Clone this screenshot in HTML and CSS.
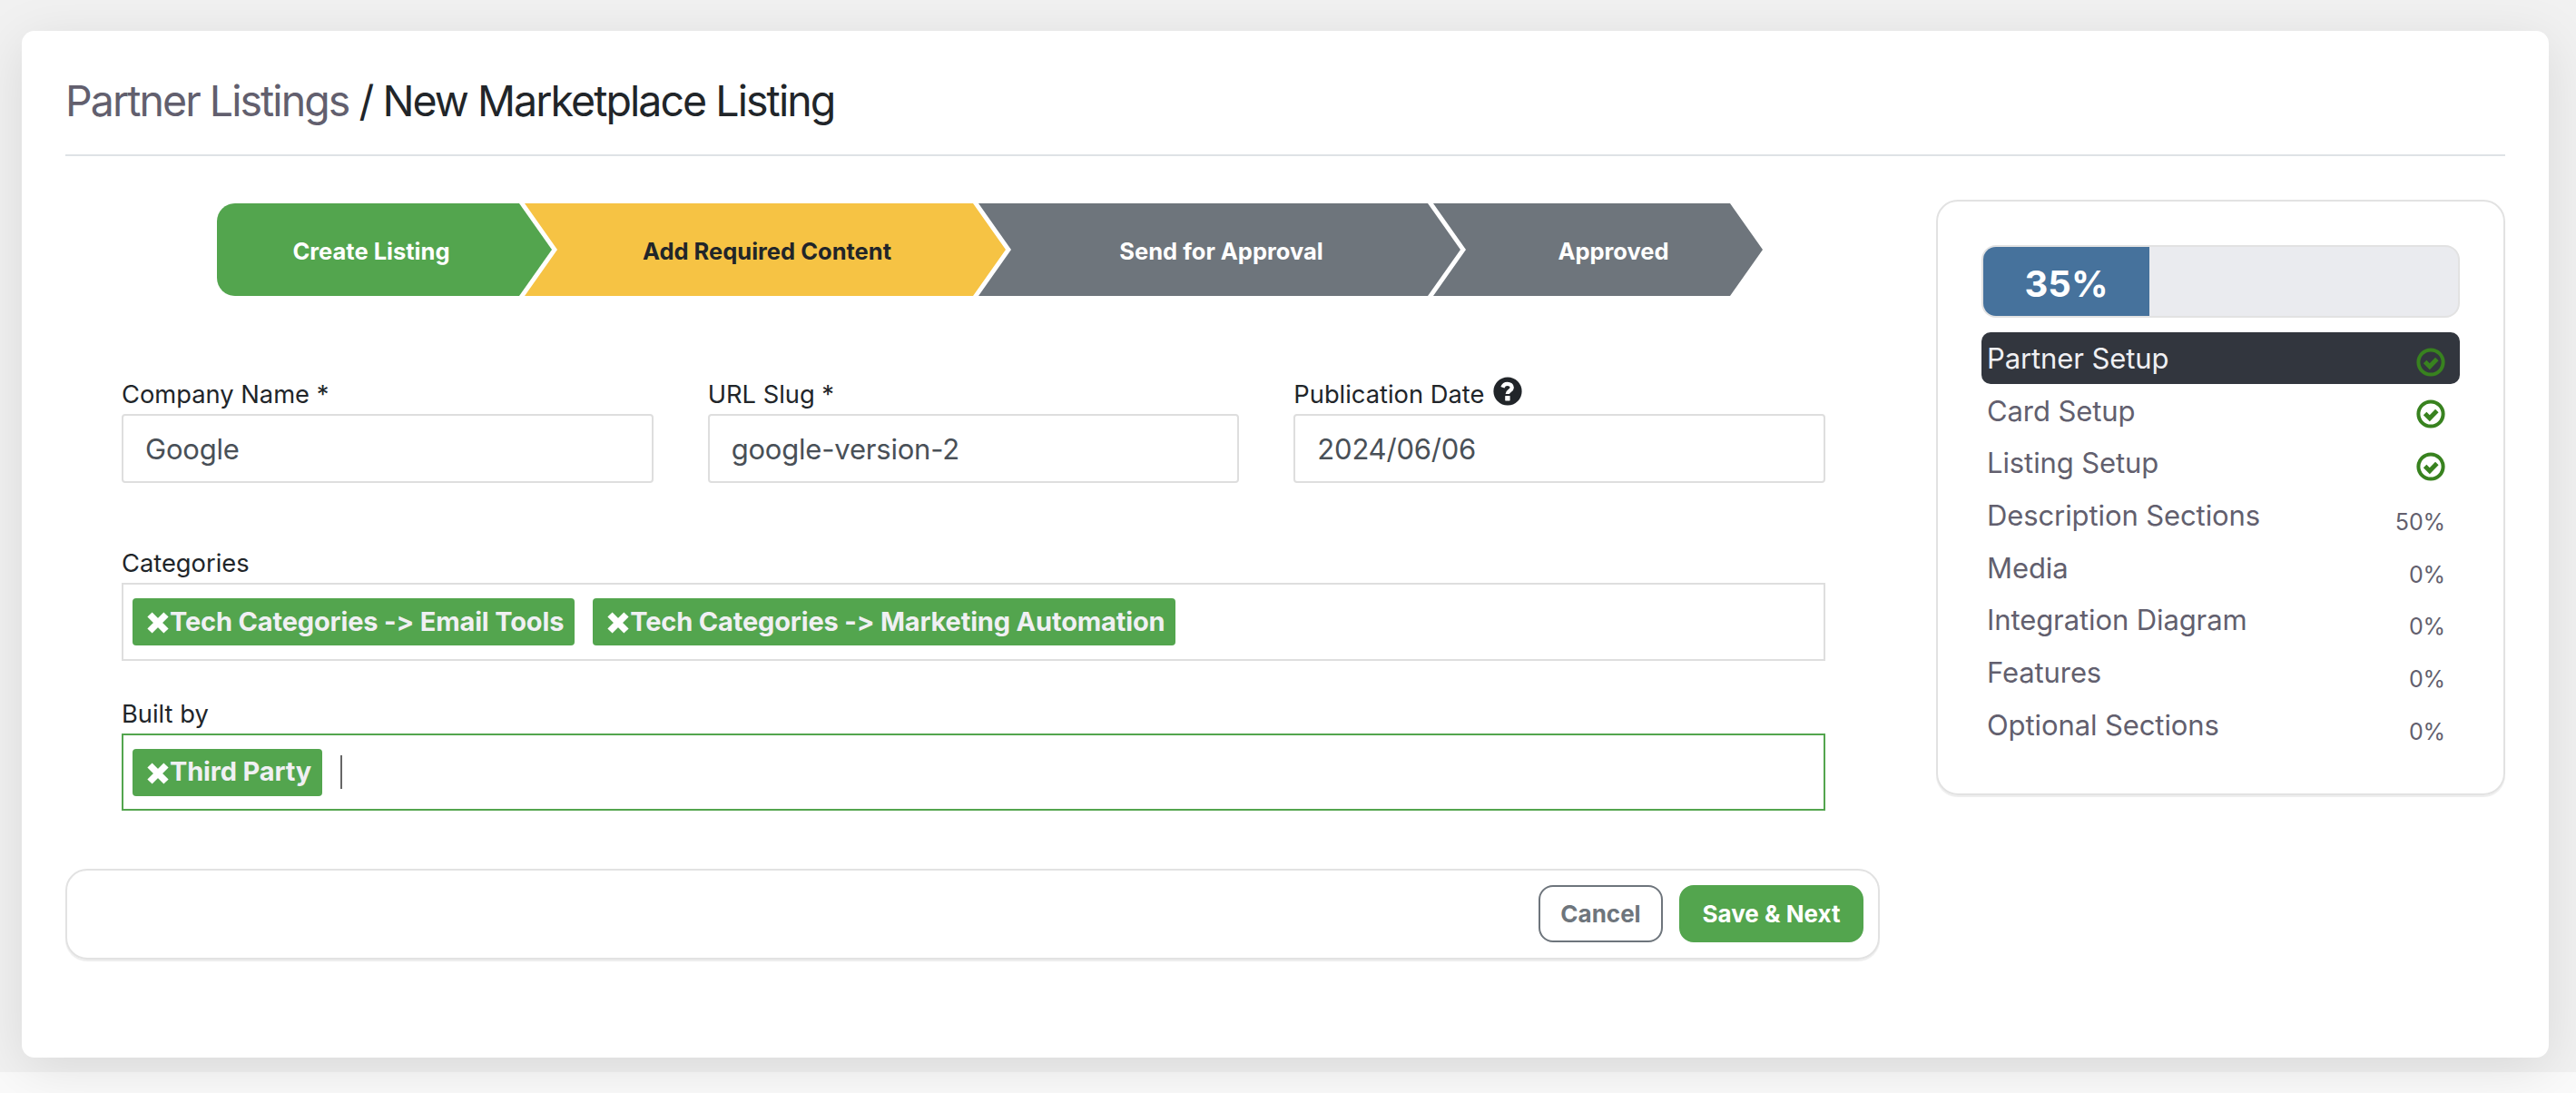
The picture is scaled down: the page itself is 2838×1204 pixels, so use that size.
FILE: index.html
```html
<!DOCTYPE html>
<html lang="en">
<head>
    <meta charset="UTF-8">
    <title>New Marketplace Listing</title>
    <link rel="stylesheet" href="styles.css">
</head>
<body>
    <svg class="sprite">
        <symbol id="icon-check" viewBox="0 0 32 32">
            <circle cx="16" cy="16" r="13.6" fill="none" stroke="currentColor" stroke-width="4"/>
            <path d="M9.6 15.6l5.2 5.2 8-8.2" fill="none" stroke="currentColor" stroke-width="5"/>
        </symbol>
        <symbol id="icon-times" viewBox="0 0 26 24">
            <path d="M4 3l18 18M22 3l-18 18" fill="none" stroke="currentColor" stroke-width="7.4"/>
        </symbol>
    </svg>

    <div class="page">
        <main class="card">
            <h1 class="title"><a class="crumb">Partner Listings</a> / New Marketplace Listing</h1>

            <div class="content">
                <div class="left">
                    <div class="steps">
                        <div class="step step-first done">Create Listing</div>
                        <div class="step current">Add Required Content</div>
                        <div class="step">Send for Approval</div>
                        <div class="step step-last">Approved</div>
                    </div>

                    <form class="form">
                        <div class="row">
                            <div class="field">
                                <label class="label" for="company">Company Name *</label>
                                <input class="input" id="company" type="text" value="Google">
                            </div>
                            <div class="field">
                                <label class="label" for="slug">URL Slug *</label>
                                <input class="input" id="slug" type="text" value="google-version-2">
                            </div>
                            <div class="field">
                                <label class="label" for="date">Publication Date
                                    <svg class="help" viewBox="0 0 32 32">
                                        <circle cx="16" cy="16" r="15.6" fill="currentColor"/>
                                        <path d="M10.4 11.8c1-2.6 2.8-3.9 5.3-3.9 2.9 0 5 1.6 5 4.1 0 3.6-4.9 3.5-4.9 7" fill="none" stroke="#fff" stroke-width="4.4"/>
                                        <rect x="13.2" y="21" width="5.4" height="5.4" rx=".6" fill="#fff"/>
                                    </svg>
                                </label>
                                <input class="input" id="date" type="text" value="2024/06/06">
                            </div>
                        </div>

                        <div class="field categories">
                            <span class="label">Categories</span>
                            <div class="tags">
                                <span class="tag"><svg class="times"><use href="#icon-times"/></svg><span class="tag-text">Tech Categories -&gt; Email Tools</span></span>
                                <span class="tag"><svg class="times"><use href="#icon-times"/></svg><span class="tag-text">Tech Categories -&gt; Marketing Automation</span></span>
                            </div>
                        </div>

                        <div class="field built">
                            <span class="label">Built by</span>
                            <div class="tags focus">
                                <span class="tag"><svg class="times"><use href="#icon-times"/></svg><span class="tag-text">Third Party</span></span>
                                <span class="caret"></span>
                            </div>
                        </div>
                    </form>

                    <div class="actions">
                        <button class="btn btn-cancel" type="button">Cancel</button>
                        <button class="btn btn-save" type="button">Save &amp; Next</button>
                    </div>
                </div>

                <aside class="side">
                    <div class="progress">
                        <div class="bar" style="width: 35%"><span class="bar-text">35%</span></div>
                    </div>
                    <ul class="menu">
                        <li class="item active"><span class="name">Partner Setup</span><svg class="check"><use href="#icon-check"/></svg></li>
                        <li class="item"><span class="name">Card Setup</span><svg class="check"><use href="#icon-check"/></svg></li>
                        <li class="item"><span class="name">Listing Setup</span><svg class="check"><use href="#icon-check"/></svg></li>
                        <li class="item"><span class="name">Description Sections</span><span class="percent">50%</span></li>
                        <li class="item"><span class="name">Media</span><span class="percent">0%</span></li>
                        <li class="item"><span class="name">Integration Diagram</span><span class="percent">0%</span></li>
                        <li class="item"><span class="name">Features</span><span class="percent">0%</span></li>
                        <li class="item"><span class="name">Optional Sections</span><span class="percent">0%</span></li>
                    </ul>
                </aside>
            </div>
        </main>
    </div>
</body>
</html>
```

FILE: styles.css
```css
*{
    box-sizing: border-box;
}

body{
    margin: 0;
    height: 1204px;
    overflow: hidden;
    background: #fafafa;
    color: #212529;
    font-family: Inter, "Liberation Sans", sans-serif;
    font-feature-settings: "calt" 0;
}

.sprite{
    display: none;
}

.page{
    height: 1181px;
    padding: 34px 30px 16px 24px;
    background: #f1f1f1;
}

.card{
    height: 1131px;
    padding: 0 48px;
    border-radius: 14px;
    background: #fff;
    box-shadow: 0 12px 60px rgba(0,0,0,.1);
}

.title{
    margin: 0;
    height: 138px;
    padding-top: 47px;
    border-bottom: 2px solid #dee2e6;
    font-size: 46.5px;
    line-height: 60px;
    font-weight: 400;
    letter-spacing: -1.95px;
    white-space: nowrap;
}

.crumb{
    color: #625f6e;
}

.content{
    display: flex;
    justify-content: space-between;
    align-items: flex-start;
    padding-top: 48px;
}

.left{
    width: 1999px;
}

/* progress arrows */
.steps{
    display: flex;
    margin: 4px 0 0 167px;
    height: 102px;
}

.step{
    display: flex;
    justify-content: center;
    align-items: center;
    width: 531px;
    margin-left: -30px;
    padding: 2px 0 0 4px;
    background: #6e757c;
    color: #fff;
    font-size: 25.5px;
    font-weight: 700;
    clip-path: polygon(0 0, calc(100% - 36px) 0, 100% 50%, calc(100% - 36px) 100%, 0 100%, 36px 50%);
}

.step-first{
    width: 369px;
    margin-left: 0;
    padding: 2px 29px 0 0;
    border-radius: 20px 0 0 20px;
    clip-path: polygon(0 0, calc(100% - 36px) 0, 100% 50%, calc(100% - 36px) 100%, 0 100%);
}

.step-last{
    width: 363px;
    padding-left: 34px;
}

.done{
    background: #53a54e;
}

.current{
    width: 530px;
    background: #f6c344;
    color: #212529;
}

.form{
    padding: 88px 60px 0 62px;
}

.row{
    display: grid;
    grid-template-columns: repeat(3, 1fr);
    gap: 60px;
}

.label{
    display: flex;
    align-items: center;
    height: 38px;
    margin-bottom: 4px;
    padding-top: 2px;
    font-size: 27.3px;
    white-space: nowrap;
}

.help{
    width: 32px;
    height: 32px;
    margin: -7px 0 0 10px;
}

.input{
    display: block;
    width: 100%;
    height: 76px;
    padding: 0 24px;
    border: 2px solid #dedede;
    border-radius: 4px;
    outline: none;
    background: #fff;
    color: #495057;
    font-family: inherit;
    font-size: 31px;
    letter-spacing: -.2px;
}

.categories{
    margin-top: 68px;
}

.built{
    margin-top: 38px;
}

.tags{
    display: flex;
    align-items: center;
    gap: 20px;
    height: 86px;
    padding: 0 10px;
    border: 2px solid #dedede;
}

.focus{
    height: 85px;
    border-color: #53a54e;
}

.tag{
    display: flex;
    align-items: center;
    height: 52px;
    padding: 0 12px 2px 15px;
    border-radius: 4px;
    background: #53a54e;
    color: #f0f0f3;
    font-size: 29px;
    font-weight: 700;
    letter-spacing: -.16px;
    white-space: nowrap;
}

.times{
    width: 26px;
    height: 24px;
    margin-top: 4px;
    color: #fff;
}

.caret{
    width: 2px;
    height: 37px;
    background: #666;
}

.actions{
    display: flex;
    justify-content: flex-end;
    align-items: center;
    gap: 18px;
    height: 100px;
    margin-top: 64px;
    padding: 0 16px 1px;
    border: 2px solid #e2e2e2;
    border-radius: 24px;
    box-shadow: 0 2px 1px #ededed;
}

.btn{
    height: 63px;
    padding: 0;
    border: 2px solid #6e757c;
    border-radius: 16px;
    background: #fff;
    color: #6e757c;
    font-family: inherit;
    font-size: 26px;
    font-weight: 700;
}

.btn-cancel{
    width: 137px;
}

.btn-save{
    width: 203px;
    border-color: #53a54e;
    background: #53a54e;
    color: #fff;
}

/* sidebar */
.side{
    width: 627px;
    height: 656px;
    padding: 48px;
    border: 2px solid #e2e2e2;
    border-radius: 24px;
    box-shadow: 0 2px 1px #ededed;
}

.progress{
    height: 80px;
    border: 2px solid #e2e2e2;
    border-radius: 16px;
    background: #eaebef;
    overflow: hidden;
}

.bar{
    display: flex;
    justify-content: center;
    align-items: center;
    height: 100%;
    padding-top: 4px;
    background: #46729c;
    color: #fff;
    font-size: 40px;
    font-weight: 700;
}

.menu{
    list-style: none;
    margin: 16px 0 0;
    padding: 0;
}

.item{
    display: flex;
    justify-content: space-between;
    height: 57.7px;
    padding: 0 16px 0 6px;
    border-radius: 10px;
    color: #625f6e;
    font-size: 31px;
    letter-spacing: -.1px;
    line-height: 57px;
}

.active{
    height: 57px;
    margin-bottom: .7px;
    background: #32363e;
    color: #f0f0f3;
}

.check{
    width: 32px;
    height: 32px;
    margin-top: 16.5px;
    color: #38821f;
}

.percent{
    font-size: 25px;
    line-height: 72px;
}
```
